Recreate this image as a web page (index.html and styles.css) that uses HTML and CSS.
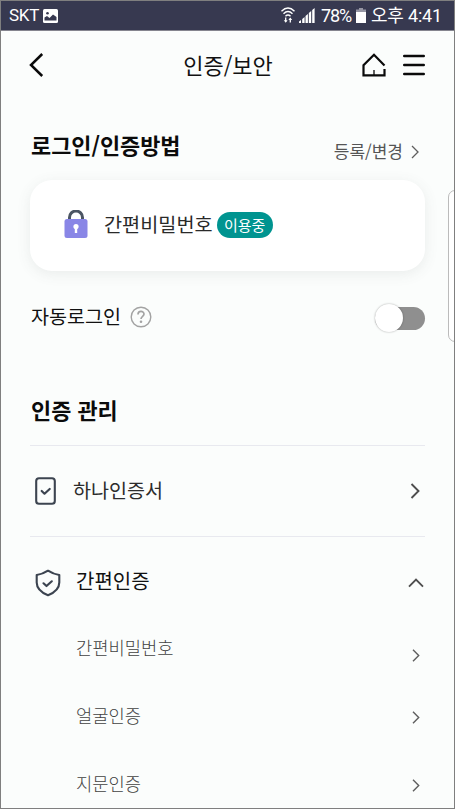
FILE: index.html
```html
<!DOCTYPE html>
<html lang="ko">
<head>
<meta charset="utf-8">
<title>인증/보안</title>
<link rel="stylesheet" href="styles.css">
</head>
<body>
<div class="screen">
  <div class="status">
    <span class="carrier">SKT</span>
    <svg class="photo" width="15" height="14" viewBox="0 0 15 14"><rect width="15" height="14" rx="1.500" fill="#fff"/><path d="M1.500 11.500V8.500L4 7l2.500 2 3.500-3.500L13.500 8v3.500z" fill="#373950"/><circle cx="4.500" cy="4.200" r="1.300" fill="#373950"/></svg>
    <div class="status-right">
      <svg class="wifi" width="14" height="17" viewBox="0 0 14 17" fill="none" stroke="#fff" stroke-width="1.400"><path d="M.5 4.200Q7-2.200 13.500 4.200M2.500 6.700Q7 2.300 11.500 6.700M4.500 9.200Q7 6.800 9.500 9.200"/><path d="M4.700 10.500v4M9.300 11.500v4" stroke-width="1.300"/><path d="M2.800 13.300h3.800L4.700 15.700zM7.400 13L9.300 10.400 11.200 13z" fill="#fff" stroke="none"/></svg>
      <svg class="signal" width="16" height="15" viewBox="0 0 16 15" fill="#fff"><path d="M0 13.500l2-1.500v3H0zM3.200 11l2.400-2v6H3.200zM6.500 8l2.400-2v9H6.500zM9.800 5l2.400-2v12H9.800zM13.200 2l2.400-2v15h-2.400z"/></svg>
      <span class="percent">78%</span>
      <svg class="battery" width="10" height="15" viewBox="0 0 10 15"><path d="M3 0h4v1.500h3V5H0V1.500h3z" fill="#9696a4"/><path d="M0 4h10v11H0z" fill="#fff"/></svg>
      <span class="clock">오후 4:41</span>
    </div>
  </div>
  <header class="header">
    <svg class="back" width="16" height="26" viewBox="0 0 16 26" fill="none" stroke="#0a0a0a" stroke-width="2.500"><path d="M14.200 2L3 13l11.200 11"/></svg>
    <h1>인증/보안</h1>
    <svg class="home" width="24" height="24" viewBox="0 0 24 24" fill="none" stroke="#0a0a0a" stroke-width="2.200"><path d="M22.500 12.500L12 1.800 1.500 12.300V22.400h21v-6.500"/><path d="M12 17v5" stroke-width="1.300"/></svg>
    <svg class="menu" width="22" height="22" viewBox="0 0 22 22" stroke="#0a0a0a" stroke-width="2.400" stroke-linecap="round"><path d="M1.200 2h19.600M1.200 11h19.600M1.200 20h19.600"/></svg>
  </header>
  <main class="content">
    <div class="section-head">
      <h2>로그인/인증방법</h2>
      <span class="change">등록/변경</span>
      <svg width="9" height="14" viewBox="0 0 9 14" fill="none" stroke="#5e5e5e" stroke-width="1.300"><path d="M1 1l6 6-6 6"/></svg>
    </div>
    <div class="card">
      <svg class="lock" width="24" height="28" viewBox="0 0 24 28"><path d="M5.500 12V7.500a6.500 6.500 0 0 1 13 0V12" fill="none" stroke="#4b5563" stroke-width="3"/><rect x=".5" y="9" width="23" height="19" rx="2.500" fill="#8986e6"/><circle cx="12" cy="16.500" r="2.600" fill="#fff"/><path d="M10.800 16.500h2.400v6.500h-2.400z" fill="#fff"/></svg>
      <span class="card-label">간편비밀번호</span>
      <span class="badge">이용중</span>
    </div>
    <div class="auto">
      <span class="auto-label">자동로그인</span>
      <svg class="help" width="22" height="22" viewBox="0 0 22 22" fill="none" stroke="#a3a3a3"><circle cx="11" cy="11" r="9.800" stroke-width="1.400"/><path d="M8 8.600C8 4.200 14 4.500 14 8.100c0 2.300-3 2.300-3 5" stroke-width="1.700"/><circle cx="11" cy="15.800" r="1.300" fill="#a3a3a3" stroke="none"/></svg>
      <span class="toggle"><span class="knob"></span></span>
    </div>
    <h2 class="manage">인증 관리</h2>
    <div class="row">
      <svg class="device" width="22" height="28" viewBox="0 0 22 28" fill="none" stroke="#3c4450" stroke-width="2.100" stroke-linecap="round" stroke-linejoin="round"><rect x="1.200" y="1.200" width="18.600" height="25.600" rx="2.800"/><path d="M6.700 14l2.800 2.700 5.200-4.700" stroke-width="2.200"/></svg>
      <span class="row-label cert">하나인증서</span>
      <svg class="arrow" width="10" height="16" viewBox="0 0 10 16" fill="none" stroke="#4e4e4e" stroke-width="1.900"><path d="M1.500 1l7 7-7 7"/></svg>
    </div>
    <div class="row simple">
      <svg class="shield" width="26" height="28" viewBox="0 0 26 28" fill="none" stroke="#3c4450" stroke-width="2.100" stroke-linecap="round" stroke-linejoin="round"><path d="M13 1.700Q18.500 5.300 24.300 6v7.500c0 6-4.500 10-11.300 12.800C6.200 23.500 1.700 19.500 1.700 13.500V6Q7.500 5.300 13 1.700z"/><path d="M8.500 14.300l3 2.700 5.300-4.700" stroke-width="2.200"/></svg>
      <span class="row-label open">간편인증</span>
      <svg class="caret" width="16" height="10" viewBox="0 0 16 10" fill="none" stroke="#4e4e4e" stroke-width="1.900"><path d="M1 8.700l7-7 7 7"/></svg>
    </div>
    <ul class="sub">
      <li><span>간편비밀번호</span><svg class="low" width="8" height="13" viewBox="0 0 8 13" fill="none" stroke="#5e5e5e" stroke-width="1.400"><path d="M1 .8l5.700 5.700L1 12.200"/></svg></li>
      <li><span>얼굴인증</span><svg width="8" height="13" viewBox="0 0 8 13" fill="none" stroke="#5e5e5e" stroke-width="1.400"><path d="M1 .8l5.700 5.700L1 12.200"/></svg></li>
      <li><span>지문인증</span><svg width="8" height="13" viewBox="0 0 8 13" fill="none" stroke="#5e5e5e" stroke-width="1.400"><path d="M1 .8l5.700 5.700L1 12.200"/></svg></li>
    </ul>
  </main>
  <div class="edge-handle"></div>
</div>
</body>
</html>
```

FILE: styles.css
```css
* { box-sizing: border-box; margin: 0; padding: 0; }
body { font-family: "Noto Sans CJK KR", sans-serif; color: #111; }
svg { display: block; flex: none; }
span, h1, h2 { white-space: nowrap; }
.screen { position: relative; height: 809px; border: 1px solid #7f7f7f; background: #fbfdfc; overflow: hidden; }
.status { display: flex; align-items: center; height: 30px; padding: 0 14px 0 8px; background: #373950; border-bottom: 1px solid #85858f; color: #fff; line-height: 29px; }
.carrier { width: 31px; font: 17px/29px Roboto, sans-serif; letter-spacing: -.3px; }
.photo { margin-left: 3px; }
.status-right { display: flex; align-items: center; margin-left: auto; }
.signal { margin-left: 4px; }
.percent { width: 31px; margin-left: 6px; font: 18px/29px Roboto, sans-serif; letter-spacing: -1.100px; }
.battery { margin-left: 4px; }
.clock { width: 69px; margin-left: 5px; font-family: Roboto, "Noto Sans CJK KR", sans-serif; font-size: 18px; letter-spacing: -.2px; }
.header { display: flex; align-items: center; height: 68px; padding: 0 29px 0 27px; }
.header h1 { flex: 1; margin: 0 0 2px 50px; text-align: center; font-size: 22px; font-weight: 400; line-height: 32px; }
.menu { margin-left: 17px; }
.content { padding: 29px 29px 0; }
.section-head { display: flex; align-items: center; height: 36px; }
h2 { margin-left: 1px; font-size: 21.900px; font-weight: 700; line-height: 36px; color: #0b0b0b; }
.section-head h2 { margin-bottom: 2px; }
.change { margin: 10px 8px 0 auto; font-size: 17px; line-height: 26px; color: #555; }
.section-head svg { margin: 11px 5px 0 0; }
.card { display: flex; align-items: center; height: 91px; margin-top: 16px; padding: 0 34px; border-radius: 22px; background: #fff; box-shadow: 0 3px 14px rgba(80, 90, 90, .1); }
.lock { margin-bottom: 3px; }
.card-label { margin: 0 0 4px 16px; font-size: 19.700px; color: #2a2a2a; }
.badge { width: 56px; height: 26px; margin-left: 4px; margin-bottom: 1px; border-radius: 13px; background: #009490; color: #fff; font-size: 15px; line-height: 25px; text-align: center; }
.auto { display: flex; align-items: center; height: 34px; margin-top: 30px; }
.auto-label { margin: 0 9px 4px 1px; font-size: 19.600px; line-height: 30px; }
.help { margin-bottom: 2px; }
.toggle { display: flex; align-items: center; width: 50px; height: 23px; margin-left: auto; border-radius: 12px; background: #8f8f8f; }
.knob { width: 28px; height: 28px; border-radius: 50%; background: #fff; box-shadow: 0 0 2px rgba(0, 0, 0, .35); }
.manage { margin-top: 57px; }
.row { display: flex; align-items: center; height: 91px; margin-top: 17px; padding: 0 5px; border-top: 1px solid #e8e9ef; }
.row-label { margin-bottom: 3px; font-size: 19.600px; line-height: 30px; }
.cert { margin-left: 16px; color: #2c2c2c; }
.arrow { margin-left: auto; }
.simple { margin-top: 0; padding-right: 1px; }
.shield { margin-top: 2px; }
.open { margin-left: 15px; font-size: 20px; }
.caret { margin: 2px 0 0 auto; }
.sub { list-style: none; padding: 0 5px 0 46px; font-size: 17.700px; font-weight: 300; color: #424242; }
.sub li { display: flex; align-items: center; justify-content: space-between; height: 42px; margin-bottom: 26px; }
.sub span { margin-bottom: 2px; }
.sub svg { margin-top: 2px; }
.sub .low { margin-top: 15px; }
.edge-handle { position: absolute; top: 189px; right: -8px; width: 14px; height: 152px; border: 1px solid #bbb; border-radius: 7px; background: #fff; }
```
